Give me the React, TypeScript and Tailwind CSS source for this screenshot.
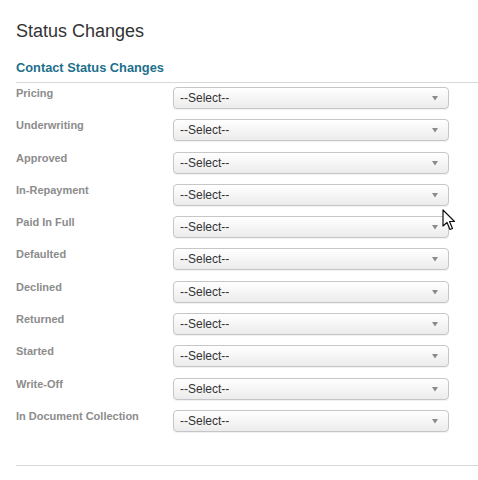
import React from "react";

const labels = [
  "Pricing",
  "Underwriting",
  "Approved",
  "In-Repayment",
  "Paid In Full",
  "Defaulted",
  "Declined",
  "Returned",
  "Started",
  "Write-Off",
  "In Document Collection",
];

function SelectBox() {
  return (
    <div className="relative w-[276px] h-[22px] rounded-[4px] border border-[#c6c6c6] bg-gradient-to-b from-[#ffffff] to-[#ececec] shadow-[0_1px_1px_rgba(0,0,0,0.06)] flex items-center pl-[6px] text-[12px] leading-[14px] text-[#333]">
      <span>--Select--</span>
      <svg
        className="absolute right-[10px] top-[8px]"
        width="6"
        height="5"
        viewBox="0 0 6 5"
      >
        <path d="M0 0 L6 0 L3 4.5 Z" fill="#8a8a8a" />
      </svg>
    </div>
  );
}

export default function App() {
  return (
    <div
      className="relative w-[478px] h-[480px] bg-white pl-4 overflow-hidden"
      style={{ fontFamily: '"Liberation Sans", Arial, sans-serif' }}
    >
      <div className="pt-[21px] text-[18px] leading-[20px] text-[#333]">
        Status Changes
      </div>
      <div className="mt-[20px] text-[12.8px] leading-[14px] font-bold text-[#1d6f8c] pb-[7px] border-b border-[#d8d8d8]">
        Contact Status Changes
      </div>
      <div className="pt-[4px] flex flex-col gap-[10.3px]">
        {labels.map((l) => (
          <div key={l} className="flex items-start h-[22px]">
            <div className="w-[157px] text-[11px] leading-[13px] font-bold text-[#8c8c8c]">
              {l}
            </div>
            <SelectBox />
          </div>
        ))}
      </div>
      <div className="mt-[33px] border-b border-[#d8d8d8]" />
      <svg
        className="absolute left-[442px] top-[209px]"
        width="14"
        height="22"
        viewBox="0 0 14 22"
      >
        <path
          d="M1 1 L1 17 L5 13.5 L8 20.5 L10.5 19.5 L7.5 12.5 L12.5 12.5 Z"
          fill="#fff"
          stroke="#111"
          strokeWidth="1.2"
          strokeLinejoin="round"
        />
      </svg>
    </div>
  );
}
